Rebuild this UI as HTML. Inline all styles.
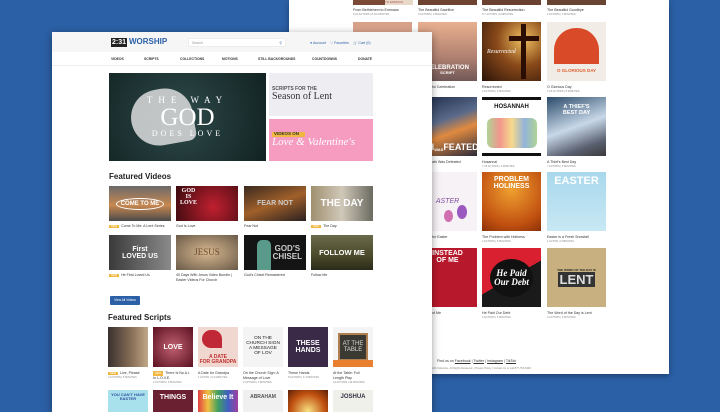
<!DOCTYPE html>
<html><head><meta charset="utf-8"><style>
*{margin:0;padding:0;box-sizing:border-box}
body{width:720px;height:405px;overflow:hidden;background:#2b60a6;font-family:"Liberation Sans",sans-serif;position:relative}
.a{position:absolute}
.pg{position:absolute;background:#fff;overflow:hidden}
.t{position:absolute;overflow:hidden;color:#fff;font-weight:bold;text-align:center;display:flex;align-items:center;justify-content:center;line-height:1}
.l{position:absolute;font-size:3.6px;color:#333;white-space:nowrap}
.s{position:absolute;font-size:2.6px;color:#888;white-space:nowrap}
.new{display:inline-block;background:#f0b840;color:#fff;font-size:2.6px;padding:0 2px;margin-right:2px}
</style></head><body>

<!-- back page -->
<div class="pg" style="left:289px;top:0;width:380px;height:374px;box-shadow:0 2px 6px rgba(0,0,0,.35)">
  <!-- row1 -->
  <div class="t" style="left:64px;top:-54px;width:59px;height:59px;background:#7a4a36"></div>
  <div class="a" style="left:96px;top:0;width:28px;height:5px;background:#e8d8c8;font-size:3px;color:#a55">TO EMMAUS</div>
  <div class="t" style="left:129px;top:-54px;width:59px;height:59px;background:#6e4430"></div>
  <div class="t" style="left:193px;top:-54px;width:59px;height:59px;background:#6a4030"></div>
  <div class="t" style="left:258px;top:-54px;width:59px;height:59px;background:#6a4432"></div>
  <div class="l" style="left:64px;top:8px">From Bethlehem to Emmaus</div><div class="s" style="left:64px;top:13px">5-10 ACTORS | 8-10 MINUTES</div>
  <div class="l" style="left:129px;top:8px">The Beautiful Sacrifice</div><div class="s" style="left:129px;top:13px">3 ACTORS | 3 MINUTES</div>
  <div class="l" style="left:193px;top:8px">The Beautiful Resurrection</div><div class="s" style="left:193px;top:13px">5-7 ACTORS | 6 MINUTES</div>
  <div class="l" style="left:258px;top:8px">The Beautiful Goodbye</div><div class="s" style="left:258px;top:13px">2 ACTORS | 3 MINUTES</div>
  <!-- row2 -->
  <div class="t" style="left:64px;top:22px;width:59px;height:59px;background:linear-gradient(#d8a088,#e8c0a8)"></div>
  <div class="t" style="left:129px;top:22px;width:59px;height:59px;background:linear-gradient(#e8b090,#b08070 60%,#705858);font-size:6px;flex-direction:column;justify-content:flex-end;padding-bottom:6px">CELEBRATION<br><span style="font-size:4px">SCRIPT</span></div>
  <div class="t" style="left:193px;top:22px;width:59px;height:59px;background:radial-gradient(circle at 70% 30%,#f0c060,#8a4a1a 45%,#2a1208);font-family:'Liberation Serif';font-style:italic;font-weight:normal;font-size:6px;justify-content:flex-start;padding-left:5px">Resurrected</div>
  <div class="a" style="left:232px;top:24px;width:5px;height:55px;background:#2a0e04"></div><div class="a" style="left:220px;top:36px;width:30px;height:5px;background:#2a0e04"></div>
  <div class="t" style="left:258px;top:22px;width:59px;height:59px;background:#f2ece6;color:#e06030;font-size:4.5px;align-items:flex-end;padding-bottom:8px">O GLORIOUS DAY</div>
  <div class="a" style="left:265px;top:28px;width:45px;height:36px;border-radius:22px 22px 0 0;background:#d84a28"></div>
  <div class="l" style="left:193px;top:85px">Resurrected</div><div class="s" style="left:193px;top:90px">2 ACTORS | 3 MINUTES</div>
  <div class="l" style="left:258px;top:85px">O Glorious Day</div><div class="s" style="left:258px;top:90px">7-24 ACTORS | 8 MINUTES</div>
  <div class="l" style="left:143px;top:85px">ful Celebration</div>
  <!-- row3 -->
  <div class="t" style="left:129px;top:97px;width:59px;height:59px;background:linear-gradient(160deg,#1c2a48,#5a6a8a 40%,#e08a40 60%,#2a2a3a);font-size:9px;align-items:flex-end;padding-bottom:4px">ATH<sub style="font-size:4px">WAS</sub><br>FEATED</div>
  <div class="t" style="left:193px;top:97px;width:59px;height:59px;background:#fff;border-top:3px solid #111;border-bottom:3px solid #111;color:#111;font-size:6px;align-items:flex-start;padding-top:4px">HOSANNAH</div>
  <div class="a" style="left:198px;top:118px;width:50px;height:30px;background:linear-gradient(90deg,#7ab850,#e85040,#f0c040,#4a80c0,#7ab850);opacity:.6;border-radius:6px"></div>
  <div class="t" style="left:258px;top:97px;width:59px;height:59px;background:linear-gradient(160deg,#2a4a6a,#c8d8e8 50%,#5a6070 80%,#3a3a3a);font-size:5.5px;color:#fff;align-items:flex-start;padding-top:8px">A THIEF'S<br>BEST DAY</div>
  <div class="l" style="left:143px;top:160px">ath Was Defeated</div>
  <div class="l" style="left:193px;top:160px">Hosanna!</div><div class="s" style="left:193px;top:165px">7-15 ACTORS | 4 MINUTES</div>
  <div class="l" style="left:258px;top:160px">A Thief's Best Day</div><div class="s" style="left:258px;top:165px">7 ACTORS | 3 MINUTES</div>
  <!-- row4 -->
  <div class="t" style="left:129px;top:172px;width:59px;height:59px;background:#f6f2f6;color:#8050a0;font-weight:normal;font-size:7px;font-style:italic">ASTER</div>
  <div class="a" style="left:168px;top:205px;width:10px;height:14px;border-radius:50%;background:#9a5ac0"></div><div class="a" style="left:155px;top:210px;width:9px;height:12px;border-radius:50%;background:#d070b0"></div>
  <div class="t" style="left:193px;top:172px;width:59px;height:59px;background:radial-gradient(circle at 50% 30%,#f0a030,#c05010 70%,#8a3008);font-size:7px;align-items:flex-start;padding-top:4px">PROBLEM<br>HOLINESS</div>
  <div class="t" style="left:258px;top:172px;width:59px;height:59px;background:linear-gradient(#a8d8ec,#c8e8f4);font-size:11px;align-items:flex-start;padding-top:4px">EASTER</div>
  <div class="l" style="left:143px;top:235px">for Easter</div>
  <div class="l" style="left:193px;top:235px">The Problem with Holiness</div><div class="s" style="left:193px;top:240px">4 ACTORS | 5 MINUTES</div>
  <div class="l" style="left:258px;top:235px">Easter is a Fresh Snowfall</div><div class="s" style="left:258px;top:240px">1 ACTOR | 3 MINUTES</div>
  <!-- row5 -->
  <div class="t" style="left:129px;top:248px;width:59px;height:59px;background:#b8182c;font-size:7px;align-items:flex-start;padding-top:2px">INSTEAD<br>OF ME</div>
  <div class="t" style="left:193px;top:248px;width:59px;height:59px;background:linear-gradient(150deg,#d82030 50%,#1a1a1a 50%);font-family:'Liberation Serif';font-style:italic;font-size:9px"><span style="background:#111;border-radius:50%;padding:10px 4px">He Paid<br>Our Debt</span></div>
  <div class="t" style="left:258px;top:248px;width:59px;height:59px;background:#c8b080;color:#222;font-size:13px;flex-direction:column"><span style="font-size:3px">THE WORD OF THE DAY IS</span><span style="background:#333;color:#ddd;padding:1px 2px">LENT</span></div>
  <div class="l" style="left:143px;top:311px">of Me</div>
  <div class="l" style="left:193px;top:311px">He Paid Our Debt</div><div class="s" style="left:193px;top:316px">2 ACTORS | 3 MINUTES</div>
  <div class="l" style="left:258px;top:311px">The Word of the Day is Lent</div><div class="s" style="left:258px;top:316px">4 ACTORS | 3 MINUTES</div>
  <div class="l" style="left:148px;top:359px">Find us on <u>Facebook</u> | <u>Twitter</u> | <u>Instagram</u> | <u>TikTok</u></div>
  <div class="s" style="left:143px;top:367px">223 Collective. All Rights Reserved. | Privacy Policy | Contact Us or call 877-754-8448</div>
</div>

<!-- front page -->
<div class="pg" style="left:52px;top:32px;width:380px;height:380px;box-shadow:0 2px 8px rgba(0,0,0,.4)">
  <div class="a" style="left:0;top:0;width:380px;height:20px;background:#f6f6f7"></div>
  <div class="a" style="left:59px;top:6px;width:16px;height:9px;background:#222;color:#fff;font-size:7px;font-weight:bold;line-height:9px;text-align:center">2:31</div>
  <div class="a" style="left:77px;top:5px;font-size:8px;font-weight:bold;color:#2b5fa6">WORSHIP</div>
  <div class="a" style="left:136px;top:6px;width:98px;height:9px;background:#fff;border:1px solid #eee;font-size:3.5px;color:#999;padding:2px 3px">Search<span style="float:right;color:#2b5fa6">&#9906;</span></div>
  <div class="l" style="left:258px;top:9px;color:#2b5fa6">&#9679; Account &nbsp;&nbsp; &#9825; Favorites &nbsp;&nbsp; &#128722; Cart (0)</div>
  <div class="a" style="left:0;top:20px;width:380px;height:14px;border-bottom:1px solid #eee"></div>
  <div class="l" style="left:59px;top:25px;font-size:3.4px;font-weight:bold;word-spacing:0">VIDEOS</div>
  <div class="l" style="left:92px;top:25px;font-size:3.4px;font-weight:bold">SCRIPTS</div>
  <div class="l" style="left:128px;top:25px;font-size:3.4px;font-weight:bold">COLLECTIONS</div>
  <div class="l" style="left:170px;top:25px;font-size:3.4px;font-weight:bold">MOTIONS</div>
  <div class="l" style="left:206px;top:25px;font-size:3.4px;font-weight:bold">STILL BACKGROUNDS</div>
  <div class="l" style="left:260px;top:25px;font-size:3.4px;font-weight:bold">COUNTDOWNS</div>
  <div class="l" style="left:306px;top:25px;font-size:3.4px;font-weight:bold">DONATE</div>
  <!-- hero -->
  <div class="t" style="left:57px;top:41px;width:157px;height:88px;background:radial-gradient(circle at 45% 50%,#2e4a4a,#122222);font-family:'Liberation Serif';font-weight:normal;flex-direction:column">
    <div class="a" style="left:22px;top:16px;width:62px;height:56px;background:#ddd;opacity:.85;border-radius:30px 30px 8px 30px;transform:rotate(-10deg)"></div>
    <span style="position:relative;font-size:9px;letter-spacing:6px">THE WAY</span><span style="position:relative;font-size:25px">GOD</span><span style="position:relative;font-size:8px;letter-spacing:3px">DOES LOVE</span></div>
  <div class="t" style="left:217px;top:41px;width:104px;height:43px;background:#eeeef2;color:#333;flex-direction:column;align-items:flex-start;padding-left:3px;font-family:'Liberation Serif';font-weight:normal"><span style="font-family:'Liberation Sans';font-weight:bold;font-size:5px;color:#555">SCRIPTS FOR THE</span><span style="font-size:10px">Season of Lent</span></div>
  <div class="t" style="left:217px;top:87px;width:104px;height:42px;background:#f59cc0;flex-direction:column;align-items:flex-start;padding-left:3px;font-weight:normal"><span style="background:#f0b840;color:#333;font-weight:bold;font-size:4.5px;padding:0 6px 0 2px">VIDEOS ON</span><span style="font-family:'Liberation Serif';font-style:italic;font-size:11px">Love &amp; Valentine's</span></div>
  <div class="a" style="left:57px;top:140px;font-size:8px;font-weight:bold;color:#222">Featured Videos</div>
  <!-- videos -->
  <div class="t" style="left:57px;top:154px;width:62px;height:35px;background:linear-gradient(#6a6a6a,#c88850 55%,#4a4a4a);font-size:6px"><span style="border:1px solid #fff;border-radius:50%;padding:2px 4px">COME TO ME</span></div>
  <div class="t" style="left:124px;top:154px;width:62px;height:35px;background:radial-gradient(circle at 60% 60%,#c02030,#3a0a0e);font-family:'Liberation Serif';font-size:6px;justify-content:flex-start;padding-left:4px;align-items:flex-start;padding-top:2px">GOD<br>IS<br>LOVE</div>
  <div class="t" style="left:192px;top:154px;width:62px;height:35px;background:linear-gradient(160deg,#3a2a20,#a0602a 50%,#2a2020);font-size:7px;color:#ccc">FEAR NOT</div>
  <div class="t" style="left:259px;top:154px;width:62px;height:35px;background:linear-gradient(90deg,#a09070,#d0c8b8 50%,#6a6a60);font-size:10px">THE DAY</div>
  <div class="l" style="left:57px;top:192px"><span class="new">NEW</span>Come To Me: A Lent Series</div>
  <div class="l" style="left:124px;top:192px">God Is Love</div>
  <div class="l" style="left:192px;top:192px">Fear Not</div>
  <div class="l" style="left:259px;top:192px"><span class="new">NEW</span>The Day</div>
  <div class="t" style="left:57px;top:203px;width:62px;height:35px;background:linear-gradient(90deg,#3a3a3a,#8a8a8a);font-size:7px">First<br>LOVED US</div>
  <div class="t" style="left:124px;top:203px;width:62px;height:35px;background:radial-gradient(#d8b890,#6a5a48);font-family:'Liberation Serif';font-size:9px;color:#6a4a30;font-weight:normal">JESUS</div>
  <div class="t" style="left:192px;top:203px;width:62px;height:35px;background:#141414;font-size:8px;justify-content:flex-end;padding-right:4px;color:#ccc">GOD'S<br>CHISEL</div>
  <div class="a" style="left:205px;top:208px;width:14px;height:30px;background:#5a9a8a;border-radius:5px 5px 0 0"></div>
  <div class="t" style="left:259px;top:203px;width:62px;height:35px;background:linear-gradient(#6a6a4a,#4a4a2a 60%,#2a2a1a);font-size:7.5px">FOLLOW ME</div>
  <div class="l" style="left:57px;top:241px"><span class="new">NEW</span>He First Loved Us</div>
  <div class="l" style="left:124px;top:241px;line-height:5px">40 Days With Jesus Video Bundle |<br>Easter Videos For Church</div>
  <div class="l" style="left:192px;top:241px">God's Chisel Remastered</div>
  <div class="l" style="left:259px;top:241px">Follow Me</div>
  <div class="a" style="left:58px;top:264px;width:30px;height:9px;background:#2b60a6;border-radius:1px;color:#fff;font-size:3.2px;line-height:9px;text-align:center">View All Videos</div>
  <div class="a" style="left:56px;top:281px;font-size:8px;font-weight:bold;color:#222">Featured Scripts</div>
  <!-- scripts -->
  <div class="t" style="left:56px;top:295px;width:40px;height:40px;background:linear-gradient(90deg,#3a3030,#8a7058 60%,#c0a888)"></div>
  <div class="t" style="left:101px;top:295px;width:40px;height:40px;background:radial-gradient(#c06070,#5a1020);font-size:7px">LOVE</div>
  <div class="t" style="left:146px;top:295px;width:40px;height:40px;background:#f0d8d0;color:#c03030;font-size:5px;align-items:flex-end;padding-bottom:2px">A DATE<br>FOR GRANDPA</div>
  <div class="a" style="left:150px;top:298px;width:20px;height:18px;background:#c02838;border-radius:10px 10px 0 10px"></div>
  <div class="t" style="left:191px;top:295px;width:40px;height:40px;background:#f4f4f4;color:#222;font-size:4.8px;font-weight:normal">ON THE<br>CHURCH SIGN<br>A MESSAGE<br>OF LOV</div>
  <div class="t" style="left:236px;top:295px;width:40px;height:40px;background:#3a2a48;font-size:7px">THESE<br>HANDS</div>
  <div class="t" style="left:281px;top:295px;width:40px;height:40px;background:#f4f4f4;"><span style="background:#3a3a32;color:#ddd;font-weight:normal;font-size:6px;padding:6px 3px;border:2px solid #b08050">AT THE<br>TABLE</span></div>
  <div class="a" style="left:281px;top:328px;width:40px;height:7px;background:#e88030"></div>
  <div class="l" style="left:56px;top:339px"><span class="new">NEW</span>Live, Please</div><div class="s" style="left:56px;top:344px">2 ACTORS | 5 MINUTES</div>
  <div class="l" style="left:101px;top:339px;line-height:5px"><span class="new">NEW</span>There Is No A.I.<br>In L.O.V.E.</div><div class="s" style="left:101px;top:349px">2 ACTORS | 6 MINUTES</div>
  <div class="l" style="left:146px;top:339px">A Date for Grandpa</div><div class="s" style="left:146px;top:344px">1 ACTOR | 3-4 MINUTES</div>
  <div class="l" style="left:191px;top:339px;line-height:5px">On the Church Sign: A<br>Message of Love</div><div class="s" style="left:191px;top:349px">2 ACTORS | 3 MINUTES</div>
  <div class="l" style="left:236px;top:339px">These Hands</div><div class="s" style="left:236px;top:344px">8 ACTORS | 3-4 MINUTES</div>
  <div class="l" style="left:281px;top:339px;line-height:5px">At the Table: Full<br>Length Play</div><div class="s" style="left:281px;top:349px">10 ACTORS | 30 MINUTES</div>
  <div class="t" style="left:56px;top:358px;width:40px;height:30px;background:#a8e0ec;color:#3050a0;font-size:4px;align-items:flex-start;padding-top:3px">YOU CAN'T HAVE<br>EASTER</div>
  <div class="t" style="left:101px;top:358px;width:40px;height:30px;background:#6a2030;font-size:7px;align-items:flex-start;padding-top:4px">THINGS</div>
  <div class="t" style="left:146px;top:358px;width:40px;height:30px;background:linear-gradient(90deg,#e04040,#f0c040,#40a060,#4060c0,#a040a0);font-size:7px;align-items:flex-start;padding-top:4px">Believe It</div>
  <div class="t" style="left:191px;top:358px;width:40px;height:30px;background:#f0f0f0;color:#555;font-size:5px;align-items:flex-start;padding-top:5px">ABRAHAM</div>
  <div class="t" style="left:236px;top:358px;width:40px;height:30px;background:radial-gradient(circle at 50% 70%,#f8e080,#c05010 60%,#5a2008)"></div>
  <div class="t" style="left:281px;top:358px;width:40px;height:30px;background:#f0f0ea;color:#334;font-size:6px;align-items:flex-start;padding-top:4px">JOSHUA</div>
</div>
</body></html>
